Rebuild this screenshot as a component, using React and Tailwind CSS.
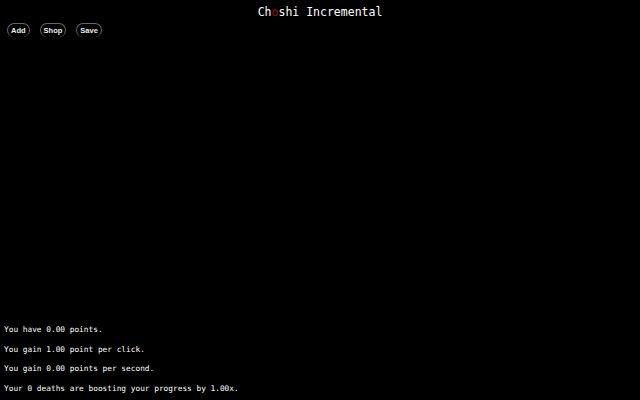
export default function App() {
  const mono = { fontFamily: '"DejaVu Sans Mono", "Liberation Mono", monospace' };
  return (
    <div className="h-screen w-full bg-black text-white flex flex-col overflow-hidden" style={mono}>
      <div className="text-center text-[11.5px] leading-[14px] pt-[5px]">
        Ch<span className="text-[#a00c0c]">o</span>shi Incremental
      </div>
      <div className="flex gap-[10px] pl-[7px] pt-[4px]">
        {['Add', 'Shop', 'Save'].map((t) => (
          <button
            key={t}
            className="h-[14px] px-[3px] text-[7.5px] font-bold leading-[13px] text-[#eee] rounded-[7px] border-t border-l border-r border-b-0 border-[#666]"
            style={{ fontFamily: '"Liberation Sans", Arial, sans-serif' }}
          >
            {t}
          </button>
        ))}
      </div>
      <div className="flex-1" />
      <div className="flex flex-col pl-[4px] pb-[2px] text-[7.8px] leading-[19.5px]">
        <p>You have 0.00 points.</p>
        <p>You gain 1.00 point per click.</p>
        <p>You gain 0.00 points per second.</p>
        <p>Your 0 deaths are boosting your progress by 1.00x.</p>
      </div>
    </div>
  );
}
